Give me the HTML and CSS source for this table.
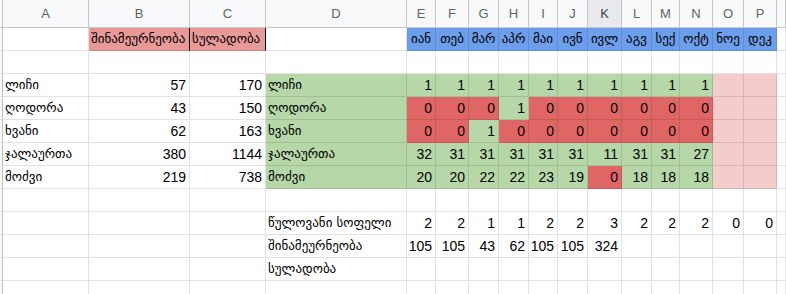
FILE: index.html
```html
<!DOCTYPE html>
<html lang="ka">
<head>
<meta charset="utf-8">
<title>Sheet</title>
<link rel="stylesheet" href="styles.css">
</head>
<body>
<div class="sheet">
  <div class="row hdr">
    <div class="cell corner"></div>
    <div class="cell h">A</div><div class="cell h">B</div><div class="cell h">C</div><div class="cell h">D</div>
    <div class="cell h">E</div><div class="cell h">F</div><div class="cell h">G</div><div class="cell h">H</div>
    <div class="cell h">I</div><div class="cell h">J</div><div class="cell h sel">K</div><div class="cell h">L</div>
    <div class="cell h">M</div><div class="cell h">N</div><div class="cell h">O</div><div class="cell h">P</div>
    <div class="cell h"></div>
  </div>
  <div class="row">
    <div class="cell rn"></div>
    <div class="cell"></div>
    <div class="cell ka pinkh blk">შინამეურნეობა</div>
    <div class="cell ka pinkh blk">სულადობა</div>
    <div class="cell"></div>
    <div class="cell ka mon">იან</div><div class="cell ka mon">თებ</div><div class="cell ka mon">მარ</div><div class="cell ka mon">აპრ</div>
    <div class="cell ka mon">მაი</div><div class="cell ka mon">ივნ</div><div class="cell ka mon">ივლ</div><div class="cell ka mon">აგვ</div>
    <div class="cell ka mon">სექ</div><div class="cell ka mon">ოქტ</div><div class="cell ka mon">ნოე</div><div class="cell ka mon">დეკ</div>
    <div class="cell"></div>
  </div>
  <div class="row">
    <div class="cell rn"></div>
    <div class="cell"></div><div class="cell"></div><div class="cell"></div><div class="cell"></div>
    <div class="cell"></div><div class="cell"></div><div class="cell"></div><div class="cell"></div>
    <div class="cell"></div><div class="cell"></div><div class="cell"></div><div class="cell"></div>
    <div class="cell"></div><div class="cell"></div><div class="cell"></div><div class="cell"></div>
    <div class="cell"></div>
  </div>
  <div class="row">
    <div class="cell rn"></div>
    <div class="cell ka">ლიჩი</div><div class="cell num">57</div><div class="cell num">170</div>
    <div class="cell ka g">ლიჩი</div>
    <div class="cell num g">1</div><div class="cell num g">1</div><div class="cell num g">1</div><div class="cell num g">1</div>
    <div class="cell num g">1</div><div class="cell num g">1</div><div class="cell num g">1</div><div class="cell num g">1</div>
    <div class="cell num g">1</div><div class="cell num g">1</div><div class="cell p"></div><div class="cell p"></div>
    <div class="cell"></div>
  </div>
  <div class="row">
    <div class="cell rn"></div>
    <div class="cell ka">ღოდორა</div><div class="cell num">43</div><div class="cell num">150</div>
    <div class="cell ka g">ღოდორა</div>
    <div class="cell num r">0</div><div class="cell num r">0</div><div class="cell num r">0</div><div class="cell num g">1</div>
    <div class="cell num r">0</div><div class="cell num r">0</div><div class="cell num r">0</div><div class="cell num r">0</div>
    <div class="cell num r">0</div><div class="cell num r">0</div><div class="cell p"></div><div class="cell p"></div>
    <div class="cell"></div>
  </div>
  <div class="row">
    <div class="cell rn"></div>
    <div class="cell ka">ხვანი</div><div class="cell num">62</div><div class="cell num">163</div>
    <div class="cell ka g">ხვანი</div>
    <div class="cell num r">0</div><div class="cell num r">0</div><div class="cell num g">1</div><div class="cell num r">0</div>
    <div class="cell num r">0</div><div class="cell num r">0</div><div class="cell num r">0</div><div class="cell num r">0</div>
    <div class="cell num r">0</div><div class="cell num r">0</div><div class="cell p"></div><div class="cell p"></div>
    <div class="cell"></div>
  </div>
  <div class="row">
    <div class="cell rn"></div>
    <div class="cell ka">ჯალაურთა</div><div class="cell num">380</div><div class="cell num">1144</div>
    <div class="cell ka g">ჯალაურთა</div>
    <div class="cell num g">32</div><div class="cell num g">31</div><div class="cell num g">31</div><div class="cell num g">31</div>
    <div class="cell num g">31</div><div class="cell num g">31</div><div class="cell num g">11</div><div class="cell num g">31</div>
    <div class="cell num g">31</div><div class="cell num g">27</div><div class="cell p"></div><div class="cell p"></div>
    <div class="cell"></div>
  </div>
  <div class="row">
    <div class="cell rn"></div>
    <div class="cell ka">მოძვი</div><div class="cell num">219</div><div class="cell num">738</div>
    <div class="cell ka g">მოძვი</div>
    <div class="cell num g">20</div><div class="cell num g">20</div><div class="cell num g">22</div><div class="cell num g">22</div>
    <div class="cell num g">23</div><div class="cell num g">19</div><div class="cell num r">0</div><div class="cell num g">18</div>
    <div class="cell num g">18</div><div class="cell num g">18</div><div class="cell p"></div><div class="cell p"></div>
    <div class="cell"></div>
  </div>
  <div class="row">
    <div class="cell rn"></div>
    <div class="cell"></div><div class="cell"></div><div class="cell"></div><div class="cell"></div>
    <div class="cell"></div><div class="cell"></div><div class="cell"></div><div class="cell"></div>
    <div class="cell"></div><div class="cell"></div><div class="cell"></div><div class="cell"></div>
    <div class="cell"></div><div class="cell"></div><div class="cell"></div><div class="cell"></div>
    <div class="cell"></div>
  </div>
  <div class="row">
    <div class="cell rn"></div>
    <div class="cell"></div><div class="cell"></div><div class="cell"></div>
    <div class="cell ka">წულოვანი სოფელი</div>
    <div class="cell num">2</div><div class="cell num">2</div><div class="cell num">1</div><div class="cell num">1</div>
    <div class="cell num">2</div><div class="cell num">2</div><div class="cell num">3</div><div class="cell num">2</div>
    <div class="cell num">2</div><div class="cell num">2</div><div class="cell num">0</div><div class="cell num">0</div>
    <div class="cell"></div>
  </div>
  <div class="row">
    <div class="cell rn"></div>
    <div class="cell"></div><div class="cell"></div><div class="cell"></div>
    <div class="cell ka">შინამეურნეობა</div>
    <div class="cell num">105</div><div class="cell num">105</div><div class="cell num">43</div><div class="cell num">62</div>
    <div class="cell num">105</div><div class="cell num">105</div><div class="cell num">324</div><div class="cell"></div>
    <div class="cell"></div><div class="cell"></div><div class="cell"></div><div class="cell"></div>
    <div class="cell"></div>
  </div>
  <div class="row">
    <div class="cell rn"></div>
    <div class="cell"></div><div class="cell"></div><div class="cell"></div>
    <div class="cell ka">სულადობა</div>
    <div class="cell"></div><div class="cell"></div><div class="cell"></div><div class="cell"></div>
    <div class="cell"></div><div class="cell"></div><div class="cell"></div><div class="cell"></div>
    <div class="cell"></div><div class="cell"></div><div class="cell"></div><div class="cell"></div>
    <div class="cell"></div>
  </div>
  <div class="row">
    <div class="cell rn"></div>
    <div class="cell"></div><div class="cell"></div><div class="cell"></div><div class="cell"></div>
    <div class="cell"></div><div class="cell"></div><div class="cell"></div><div class="cell"></div>
    <div class="cell"></div><div class="cell"></div><div class="cell"></div><div class="cell"></div>
    <div class="cell"></div><div class="cell"></div><div class="cell"></div><div class="cell"></div>
    <div class="cell"></div>
  </div>
</div>
</body>
</html>
```
FILE: styles.css
```css
html, body {
  margin: 0;
  padding: 0;
  background: #ffffff;
  overflow: hidden;
}
body {
  font-family: "Liberation Sans", Arial, sans-serif;
  font-size: 14px;
  color: #000000;
}
.sheet {
  display: flex;
  flex-direction: column;
  width: 786px;
  height: 294px;
  overflow: hidden;
}
.row {
  display: grid;
  grid-template-columns: 3px 86px 101px 76px 141px 29px 33px 30px 30px 29px 30px 34px 30px 28px 33px 31px 33px minmax(0, 1fr);
  height: 23px;
  flex: none;
}
.cell {
  box-sizing: border-box;
  border-right: 1px solid rgba(0, 0, 0, 0.115);
  border-bottom: 1px solid rgba(0, 0, 0, 0.115);
  padding: 0 3px 3px 3px;
  display: flex;
  align-items: flex-end;
  white-space: nowrap;
  overflow: hidden;
  line-height: 16px;
}
.rn {
  background: #f8f9fa;
  border-right: 1px solid #c0c0c0;
  border-bottom: 1px solid #e2e2e2;
  padding: 0;
}
.hdr {
  height: 28px;
}
.hdr .cell {
  background: #f8f9fa;
  border-right: 1px solid #c4c7c5;
  border-bottom: 1px solid #c4c7c5;
  justify-content: center;
  align-items: center;
  padding: 0;
  color: #5f6368;
  font-size: 13px;
}
.hdr .sel {
  background: #e8eaed;
  color: #3c4043;
}
.ka {
  font-family: "DejaVu Sans", "Noto Sans", sans-serif;
  font-size: 13px;
  padding-left: 2px;
}
.num {
  justify-content: flex-end;
}
.pinkh {
  background: #ea9999;
}
.blk {
  border-right: 1px solid #000000;
}
.mon {
  background: #6d9eeb;
  justify-content: center;
  padding: 0 0 3px 0;
}
.g {
  background: #b6d7a8;
}
.r {
  background: #e06666;
}
.p {
  background: #f4cccc;
}
```
